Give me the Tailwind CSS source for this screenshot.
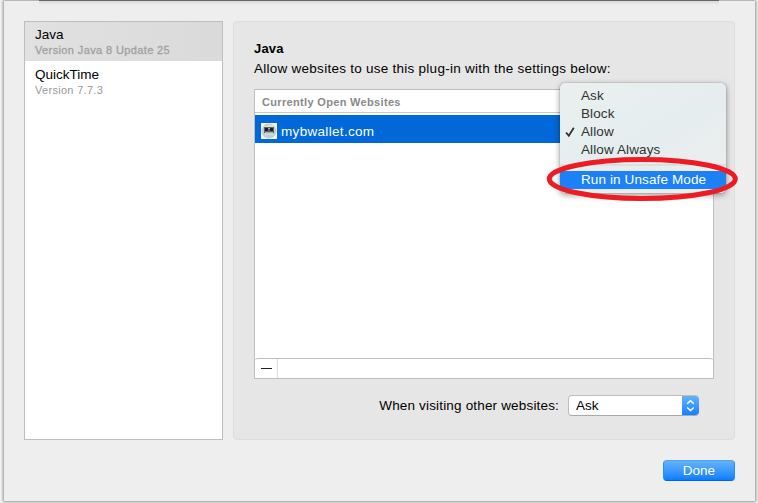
<!DOCTYPE html>
<html lang="en">
<head>
<meta charset="utf-8">
<title>Plug-in settings</title>
<script src="https://cdn.jsdelivr.net/npm/@tailwindcss/browser@4"></script>
</head>
<body class="h-[503px] w-[758px] overflow-hidden bg-[#f5f5f5] font-['Liberation_Sans',Arial,sans-serif] text-[13.5px] leading-[18px] whitespace-nowrap text-black">
<div class="relative h-[503px] w-[758px] overflow-hidden pt-px pl-1">
  <main class="flex h-[500px] w-[751px] flex-col bg-[#eeeeee] px-5 pt-5 shadow-[0_0_3px_1px_rgba(0,0,0,0.42)]">
    <div class="flex h-[419px] gap-[10px]">
      <aside class="w-[199px] border border-[#bdbdbd] bg-white">
        <div class="h-[39px] bg-gradient-to-r from-[#e1e1e1] to-[#dadada] pt-[3px] pl-[10px]">
          <div class="h-[18px] pt-px">Java</div>
          <div class="text-[11px] leading-[14px] tracking-[0.38px] text-[#a0a0a0] [-webkit-text-stroke:0.3px_#a0a0a0]">Version Java 8 Update 25</div>
        </div>
        <div class="h-10 pt-1 pl-[10px]">
          <div class="h-[18px] pt-px">QuickTime</div>
          <div class="text-[11px] leading-[14px] tracking-[0.3px] text-[#999999]">Version 7.7.3</div>
        </div>
      </aside>
      <section class="w-[502px] rounded-[4px] border border-[#dedede] bg-[#e6e6e6] pt-[17px] pl-5">
        <h1 class="h-5 pt-px text-[13px] font-bold tracking-[0.2px]">Java</h1>
        <p class="h-[30px] pt-px tracking-[0.26px]">Allow websites to use this plug-in with the settings below:</p>
        <div class="flex h-[290px] w-[460px] flex-col border border-[#bebebe] bg-white">
          <div class="h-[23px] border-b border-[#c8c8c8] pl-[7px] text-[11px] leading-[24px] font-bold tracking-[0.33px] text-[#898989]">Currently Open Websites</div>
          <div class="mt-[2px] flex h-7 items-center gap-1 bg-[#0068d9] pl-[6px] text-white">
            <svg class="mt-1" width="16" height="16" viewBox="0 0 16 16">
              <path fill="#f7f7f5" d="M0 0h16v16H0z"/>
              <circle cx="8" cy="8" r="7.5" fill="#c8cdd0"/>
              <path fill="#e0e1df" d="M3 4l2-2h7l1 2z"/>
              <path fill="#59656a" d="M3 4h10v6H3z"/>
              <path fill="#172027" d="M4 5h3v3H4zM9 5h3v3H9z"/>
              <path fill="#a6b3b8" d="M7 5h2v1H7zM4 9h8v1H4z"/>
              <path fill="#d8b75e" d="M5 2h1v1H5z"/>
              <path fill="#d9dddd" d="M4 11h8v1H4z"/>
            </svg>
            <span class="mt-[5px] h-[18px] tracking-[0.32px]">mybwallet.com</span>
          </div>
          <div class="flex-1"></div>
          <div class="flex h-[20px] rounded-[3px] border-t border-[#bebebe]">
            <div class="flex w-[23px] justify-center border-r border-[#dedede] pt-[9px]"><span class="h-px w-[11px] bg-[#222]"></span></div>
          </div>
        </div>
        <div class="mt-[16px] flex h-[21px] w-[445px] items-center justify-end gap-[9px]">
          <span class="tracking-[0.17px]">When visiting other websites:</span>
          <div class="flex h-[21px] w-[131px] overflow-hidden rounded-[4px] border border-r-0 border-[#bebebe] border-b-[#aaa] bg-white">
            <span class="flex-1 pl-[7px] leading-[20px]">Ask</span>
            <span class="-my-px flex w-[17px] items-center justify-center bg-gradient-to-b from-[#68b3f8] to-[#067cff]">
              <svg width="9" height="13" viewBox="0 0 9 13" fill="none" stroke="white" stroke-width="1.4"><path d="M1.2 4.8l3.3-3 3.3 3M1.2 8.6l3.3 3 3.3-3"/></svg>
            </span>
          </div>
        </div>
      </section>
    </div>
    <button class="mt-5 h-[21px] w-[72px] self-end rounded-[4px] border border-[#2690f5] border-t-[#4ea3ed] border-b-[#0062e8] bg-gradient-to-b from-[#64b3f8] to-[#057dff] leading-[19px] text-white">Done</button>
  </main>

  <div class="absolute top-0 left-[39px] h-[5px] w-[680px] bg-[linear-gradient(#696467_0px,#696467_1px,#dad9da_1px,#eeeeee_5px)]"></div>

  <div class="absolute top-[83px] left-[560px] h-[110px] w-[166px] rounded-[5px] bg-gradient-to-br from-[#eaf0ef] via-[#e5edef] to-[#eeeeee] pt-1 tracking-[0.12px] text-[#303333] shadow-[0_2px_6px_rgba(0,0,0,0.4),0_0_1px_rgba(0,0,0,0.6)]">
    <div class="h-[18px] pl-[21px]">Ask</div>
    <div class="h-[18px] pl-[21px]">Block</div>
    <div class="flex h-[18px] pl-[5px]">
      <svg class="mt-1 mr-[5px]" width="11" height="11" viewBox="0 0 11 11" fill="none" stroke="#303333" stroke-width="1.8"><path d="M1 5.5l2.8 3.2L8.8 .8"/></svg>
      <span>Allow</span>
    </div>
    <div class="h-[18px] pl-[21px]">Allow Always</div>
    <div class="mt-[5px] h-[2px] bg-[#dce0e0]"></div>
    <div class="mt-[5px] h-[18px] bg-gradient-to-b from-[#1e80f2] to-[#1b82fc] pl-[21px] text-white">Run in Unsafe Mode</div>
  </div>

  <svg class="absolute top-[150px] left-[540px]" width="208" height="60" viewBox="540 150 208 60" fill="none">
    <ellipse cx="642.3" cy="179" rx="93" ry="19.5" stroke="#ed1c24" stroke-width="5"/>
  </svg>
</div>
</body>
</html>
